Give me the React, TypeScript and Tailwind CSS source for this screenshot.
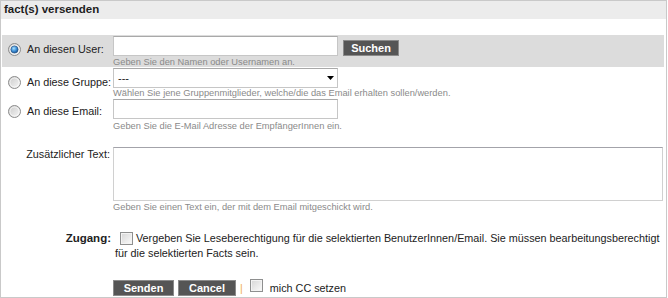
import { FunctionComponent } from "react";

const Radio: FunctionComponent<{ checked?: boolean }> = ({ checked }) => (
  <svg width="13" height="13" viewBox="0 0 13 13" className="shrink-0">
    <defs>
      <linearGradient id={checked ? "rf1" : "rf0"} x1="0" y1="0" x2="1" y2="1">
        <stop offset="0" stopColor="#c9c9c9" />
        <stop offset="1" stopColor="#f8f8f8" />
      </linearGradient>
      <radialGradient id="rdot" cx="0.4" cy="0.35" r="0.7">
        <stop offset="0" stopColor="#a9e1ff" />
        <stop offset="0.55" stopColor="#3c8ed6" />
        <stop offset="1" stopColor="#1a4f8a" />
      </radialGradient>
    </defs>
    <circle cx="6.5" cy="6.5" r="6" fill={checked ? "url(#rf1)" : "url(#rf0)"} stroke="#8c8c8c" />
    <circle cx="6.5" cy="6.5" r="4.5" fill="none" stroke="#ffffff" strokeOpacity="0.6" />
    {checked && <circle cx="6.5" cy="6.5" r="3.6" fill="url(#rdot)" stroke="#1d4c80" strokeWidth="0.6" />}
  </svg>
);

const Check: FunctionComponent<{ className?: string }> = ({ className = "" }) => (
  <span
    className={
      "inline-block w-[13px] h-[13px] border border-[#8e8f8f] bg-gradient-to-br from-[#d6d6d6] to-[#fbfbfb] shadow-[inset_0_0_0_1px_#f3f3f3] align-middle " +
      className
    }
  />
);

const Hint: FunctionComponent<{ children: React.ReactNode; className?: string }> = ({ children, className = "" }) => (
  <div className={"text-[9.3px] leading-[11px] text-[#8a8a8a] whitespace-nowrap " + className}>{children}</div>
);

const DarkButton: FunctionComponent<{ label: string; className?: string }> = ({ label, className = "" }) => (
  <button
    className={
      "h-[16px] bg-[#555555] border border-[#8a8a8a] text-white font-bold text-[11px] leading-[14px] flex items-center justify-center " +
      className
    }
  >
    {label}
  </button>
);

const App: FunctionComponent = () => {
  return (
    <div className="w-[667px] h-[298px] border border-[#c9c9c9] bg-white font-['Liberation_Sans',Arial,sans-serif] text-[10.8px] text-[#222] overflow-hidden">
      <div className="h-[18px] bg-[#ececec] flex items-center pl-[3px] font-bold text-[11.5px] text-[#1e1e1e]">
        fact(s) versenden
      </div>

      <div className="pt-[16px] px-[1px]">
        {/* An diesen User */}
        <div className="flex h-[32px] bg-[#dcdcdc] w-[662px]">
          <div className="w-[111px] shrink-0 flex items-center gap-[6px] pl-[6px] pt-[8px] self-start whitespace-nowrap">
            <Radio checked />
            <span className="leading-[13px]">An diesen User:</span>
          </div>
          <div className="flex flex-col pt-[1px]">
            <div className="flex items-end">
              <input className="w-[225px] h-[20px] bg-white border border-[#c6c6c6] border-t-[#a9a9a9] outline-none" />
              <DarkButton label="Suchen" className="w-[56px] ml-[5px]" />
            </div>
            <Hint className="mt-[1px]">Geben Sie den Namen oder Usernamen an.</Hint>
          </div>
        </div>

        {/* An diese Gruppe */}
        <div className="flex h-[32px]">
          <div className="w-[111px] shrink-0 flex items-center gap-[6px] pl-[6px] pt-[9px] self-start whitespace-nowrap">
            <Radio />
            <span className="leading-[13px]">An diese Gruppe:</span>
          </div>
          <div className="flex flex-col pt-[1px]">
            <div className="w-[225px] h-[20px] border border-[#c6c6c6] border-t-[#a9a9a9] flex items-center justify-between pl-[4px] pr-[3px]">
              <span className="text-[11px] leading-[13px]">---</span>
              <svg width="7" height="4" viewBox="0 0 7 4">
                <path d="M0 0 L7 0 L3.5 4 Z" fill="#000" />
              </svg>
            </div>
            <Hint>Wählen Sie jene Gruppenmitglieder, welche/die das Email erhalten sollen/werden.</Hint>
          </div>
        </div>

        {/* An diese Email */}
        <div className="flex h-[34px]">
          <div className="w-[111px] shrink-0 flex items-center gap-[6px] pl-[6px] pt-[6px] self-start whitespace-nowrap">
            <Radio />
            <span className="leading-[13px]">An diese Email:</span>
          </div>
          <div className="flex flex-col">
            <input className="w-[225px] h-[20px] bg-white border border-[#c6c6c6] border-t-[#a9a9a9] outline-none" />
            <Hint className="mt-[2px]">Geben Sie die E-Mail Adresse der EmpfängerInnen ein.</Hint>
          </div>
        </div>

        {/* Zusätzlicher Text */}
        <div className="flex mt-[14px]">
          <div className="w-[111px] shrink-0 text-right pr-[3px] pt-[1px] leading-[13px]">Zusätzlicher Text:</div>
          <div className="flex flex-col">
            <textarea className="w-[550px] h-[54px] bg-white border border-[#d0d0d0] border-t-[#a3a3aa] resize-none outline-none" />
            <Hint className="mt-[1px]">Geben Sie einen Text ein, der mit dem Email mitgeschickt wird.</Hint>
          </div>
        </div>

        {/* Zugang */}
        <div className="flex mt-[18px]">
          <div className="w-[111px] shrink-0 text-right pr-[2px] font-bold text-[11.5px] leading-[15px]">Zugang:</div>
          <div className="w-[551px] leading-[15px] pl-[2px]">
            <Check className="ml-[5px] mr-[3px] relative top-[-1px]" />
            Vergeben Sie Leseberechtigung für die selektierten BenutzerInnen/Email. Sie müssen bearbeitungsberechtigt für die selektierten Facts sein.
          </div>
        </div>

        {/* Buttons */}
        <div className="flex mt-[18px]">
          <div className="w-[111px] shrink-0" />
          <div className="flex items-center">
            <DarkButton label="Senden" className="w-[61px]" />
            <DarkButton label="Cancel" className="w-[58px] ml-[4px]" />
            <span className="ml-[4px] text-[#f0b050] leading-[13px]">|</span>
            <Check className="ml-[7px] mb-[5px]" />
            <span className="ml-[7px] leading-[13px]">mich CC setzen</span>
          </div>
        </div>
      </div>
    </div>
  );
};

export default App;
